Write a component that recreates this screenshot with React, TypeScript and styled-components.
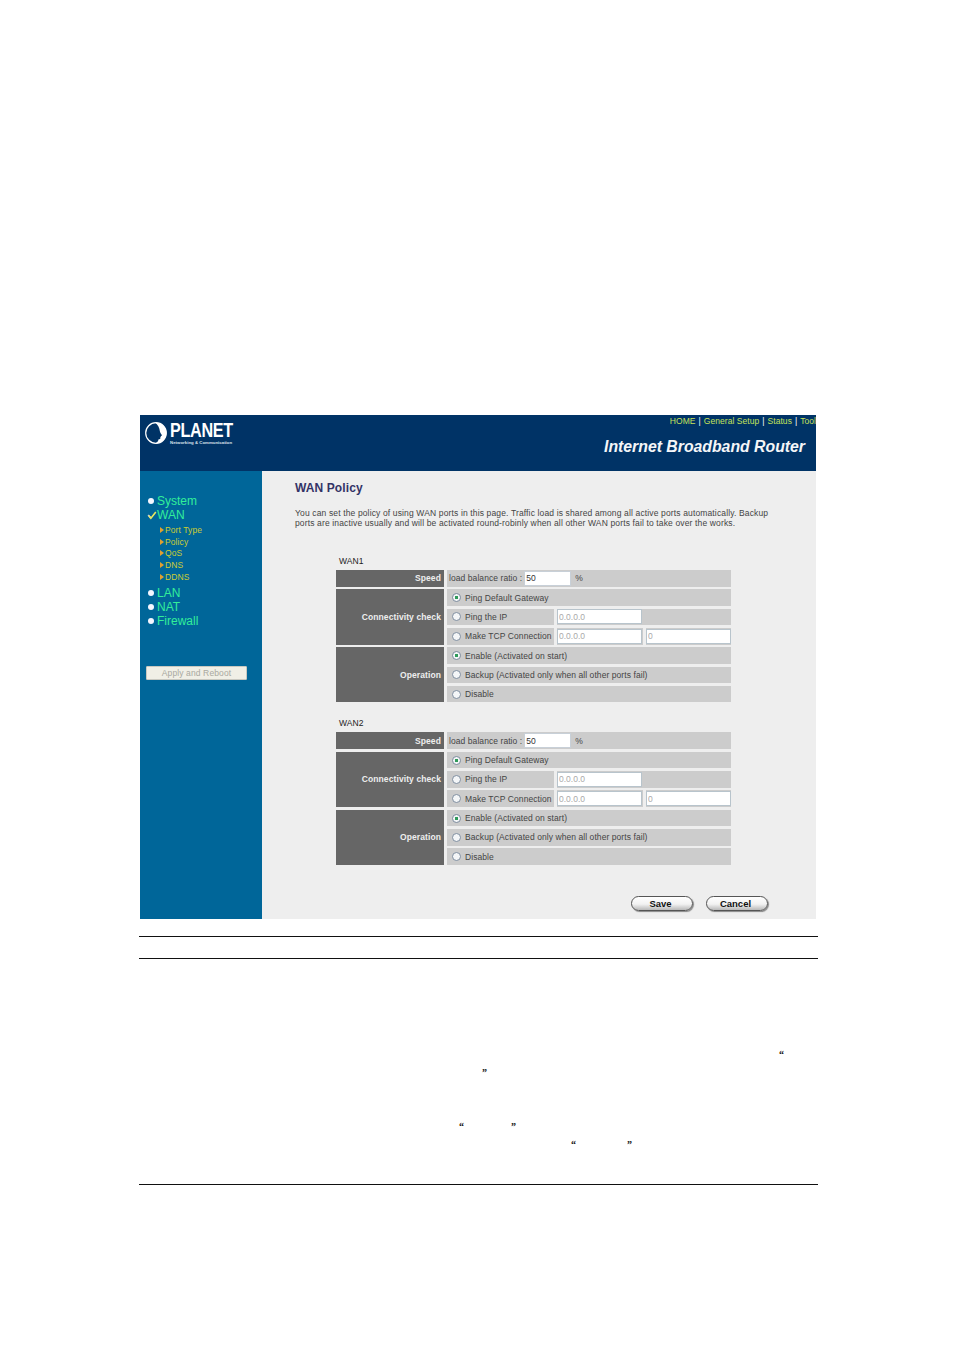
import styled, { createGlobalStyle } from "styled-components";

const GlobalStyle = createGlobalStyle`
  html, body {
    margin: 0;
    padding: 0;
    background: #fff;
  }
  body {
    font-family: "Liberation Sans", Arial, sans-serif;
  }
`;

const navLinks = ["HOME", "General Setup", "Status", "Tool"];
const subMenu = ["Port Type", "Policy", "QoS", "DNS", "DDNS"];

function Logo(): JSX.Element {
  return (
    <LogoWrap>
      <svg width="24" height="24" viewBox="0 0 24 24">
        <circle cx="12" cy="12" r="10.3" fill="none" stroke="#fff" strokeWidth="1.2" />
        <path
          d="M11 1.7c6.6-.6 11.4 4.2 11.4 10.3 0 6-4.8 10.4-11 10.4 1.6-1 3-2.4 3.2-4.2.6.2 1.6.2 1.8-.6.1-.6-.2-1-.1-1.4.5-.2.8-.6.5-1.1.6-.2 1.3-.5 1-1.1-.5-1-1.6-2-1.8-3.2C15.400 6.300 13.800 3.200 11 1.700z"
          fill="#fff"
        />
      </svg>
      <LogoText>
        <LogoName>PLANET</LogoName>
        <LogoTag>Networking &amp; Communication</LogoTag>
      </LogoText>
    </LogoWrap>
  );
}

function Tick(): JSX.Element {
  return (
    <svg width="10" height="9" viewBox="0 0 10 9">
      <path d="M.5 4.500 1.800 3.500 3.600 5.600 3.600 8.200z" fill="#c8ccd8" />
      <path d="M2 4.800 3.900 7.200 8.800 1" fill="none" stroke="#e8e860" strokeWidth="1.600" />
    </svg>
  );
}

function Wan({ name }: { name: string }): JSX.Element {
  return (
    <section>
      <WanName>{name}</WanName>
      <WanGrid>
        <HeadCell $rows={1}>Speed</HeadCell>
        <Cell $span={3}>
          load balance ratio :<SmallInput $w={47} defaultValue="50" />
          <Percent>%</Percent>
        </Cell>

        <HeadCell $rows={3}>Connectivity check</HeadCell>
        <Cell $span={3}>
          <Radio type="radio" name={`${name}-check`} defaultChecked />
          Ping Default Gateway
        </Cell>
        <Cell>
          <Radio type="radio" name={`${name}-check`} />
          Ping the IP
        </Cell>
        <Cell $span={2}>
          <FieldInput $w={85} defaultValue="0.0.0.0" disabled />
        </Cell>
        <Cell>
          <Radio type="radio" name={`${name}-check`} />
          Make TCP Connection
        </Cell>
        <Cell>
          <FieldInput $w={85} defaultValue="0.0.0.0" disabled />
        </Cell>
        <Cell>
          <FieldInput $w={85} defaultValue="0" disabled />
        </Cell>

        <HeadCell $rows={3}>Operation</HeadCell>
        <Cell $span={3}>
          <Radio type="radio" name={`${name}-op`} defaultChecked />
          Enable (Activated on start)
        </Cell>
        <Cell $span={3}>
          <Radio type="radio" name={`${name}-op`} />
          Backup (Activated only when all other ports fail)
        </Cell>
        <Cell $span={3}>
          <Radio type="radio" name={`${name}-op`} />
          Disable
        </Cell>
      </WanGrid>
    </section>
  );
}

export default function App(): JSX.Element {
  return (
    <Page>
      <GlobalStyle />
      <Frame>
        <Header>
          <Logo />
          <HeaderRight>
            <TopNav>
              {navLinks.map((link, i) => (
                <span key={link}>
                  {i > 0 && <NavSep>|</NavSep>}
                  {link}
                </span>
              ))}
            </TopNav>
            <Product>Internet Broadband Router</Product>
          </HeaderRight>
        </Header>
        <Body>
          <Sidebar>
            <MenuItem>
              <Bullet />
              System
            </MenuItem>
            <MenuItem>
              <TickBox>
                <Tick />
              </TickBox>
              WAN
            </MenuItem>
            <SubList>
              {subMenu.map((item) => (
                <SubItem key={item}>
                  <Arrow />
                  {item}
                </SubItem>
              ))}
            </SubList>
            <MenuItem>
              <Bullet />
              LAN
            </MenuItem>
            <MenuItem>
              <Bullet />
              NAT
            </MenuItem>
            <MenuItem>
              <Bullet />
              Firewall
            </MenuItem>
            <ApplyButton disabled>Apply and Reboot</ApplyButton>
          </Sidebar>
          <Main>
            <Title>WAN Policy</Title>
            <Description>
              You can set the policy of using WAN ports in this page. Traffic load is shared among all active ports
              automatically. Backup
              <br />
              ports are inactive usually and will be activated round-robinly when all other WAN ports fail to take over
              the works.
            </Description>
            <Tables>
              <Wan name="WAN1" />
              <Wan name="WAN2" />
            </Tables>
            <Actions>
              <PillButton>Save</PillButton>
              <PillButton>Cancel</PillButton>
            </Actions>
          </Main>
        </Body>
      </Frame>
      <TableRules />
      <Notes>
        <NoteLine>
          <Quote $left={639}>“</Quote>
        </NoteLine>
        <NoteLine>
          <Quote $left={342}>”</Quote>
        </NoteLine>
        <NoteLine />
        <NoteLine />
        <NoteLine>
          <Quote $left={319}>“</Quote>
          <Quote $left={47}>”</Quote>
        </NoteLine>
        <NoteLine>
          <Quote $left={431}>“</Quote>
          <Quote $left={51}>”</Quote>
        </NoteLine>
      </Notes>
      <BottomRule />
    </Page>
  );
}

const Page = styled.div`
  width: 954px;
  height: 1349px;
  padding: 415px 0 0 140px;
  box-sizing: border-box;
  overflow: hidden;
`;

const Frame = styled.div`
  width: 676px;
  height: 504px;
  display: flex;
  flex-direction: column;
`;

const Header = styled.header`
  height: 56px;
  flex: none;
  background: #003366;
  display: flex;
  justify-content: space-between;
`;

const LogoWrap = styled.div`
  display: flex;
  align-items: flex-start;
  gap: 2px;
  padding: 6px 0 0 4px;
`;

const LogoText = styled.div`
  display: flex;
  flex-direction: column;
  color: #fff;
`;

const LogoName = styled.div`
  font-size: 20px;
  line-height: 18px;
  font-weight: 700;
  letter-spacing: -0.4px;
  transform: scaleX(0.81);
  transform-origin: left;
`;

const LogoTag = styled.div`
  margin-top: 1px;
  font-size: 4.300px;
  line-height: 5px;
  font-weight: 700;
  letter-spacing: 0.03px;
  white-space: nowrap;
  color: #dfe6ee;
`;

const HeaderRight = styled.div`
  display: flex;
  flex-direction: column;
  align-items: flex-end;
`;

const TopNav = styled.nav`
  height: 13px;
  font-size: 8.500px;
  line-height: 13px;
  letter-spacing: 0.05px;
  color: #c6e25a;
  white-space: nowrap;
`;

const NavSep = styled.span`
  color: #fff;
  margin: 0 3px;
`;

const Product = styled.div`
  margin: 10px 11px 0 0;
  font-size: 15.800px;
  line-height: 18px;
  font-weight: 700;
  font-style: italic;
  color: #f4f6f8;
  white-space: nowrap;
`;

const Body = styled.div`
  flex: 1;
  display: flex;
  min-height: 0;
`;

const Sidebar = styled.aside`
  width: 122px;
  flex: none;
  background: #006699;
  padding: 23px 0 0 7px;
  box-sizing: border-box;
`;

const MenuItem = styled.div`
  display: flex;
  align-items: center;
  height: 14px;
  font-size: 12px;
  line-height: 14px;
  color: #33ee99;
`;

const Bullet = styled.span`
  width: 6px;
  height: 6px;
  margin: 0 3px 0 1px;
  border-radius: 50%;
  background: #f4f6ff;
`;

const TickBox = styled.span`
  width: 10px;
  height: 9px;
  display: flex;
`;

const SubList = styled.div`
  padding: 2px 0 3px 13px;
`;

const SubItem = styled.div`
  display: flex;
  align-items: center;
  height: 11.800px;
  font-size: 8.500px;
  letter-spacing: 0.1px;
  color: #cccc33;
`;

const Arrow = styled.span`
  width: 0;
  height: 0;
  margin-right: 1px;
  border-left: 4px solid #e0a030;
  border-top: 3px solid transparent;
  border-bottom: 3px solid transparent;
`;

const ApplyButton = styled.button`
  display: block;
  width: 101px;
  height: 14px;
  margin: 38px 0 0 -1px;
  padding: 0;
  border: 1px solid #c8c8c0;
  border-radius: 1px;
  background: #f0efe6;
  color: #a8a8a0;
  font-family: inherit;
  font-size: 8.500px;
  letter-spacing: 0.12px;
  line-height: 12px;
`;

const Main = styled.main`
  flex: 1;
  background: #eeeeee;
  padding-top: 10px;
  min-width: 0;
`;

const Title = styled.h1`
  margin: 0 0 0 33px;
  font-size: 12px;
  line-height: 14px;
  font-weight: 700;
  letter-spacing: 0.1px;
  color: #333366;
`;

const Description = styled.p`
  margin: 13px 0 0 33px;
  font-size: 8.500px;
  line-height: 10px;
  letter-spacing: 0.14px;
  color: #444;
  white-space: nowrap;
`;

const Tables = styled.div`
  margin: 28px 0 0 74px;
  width: 395px;
  display: flex;
  flex-direction: column;
  gap: 16px;
`;

const WanName = styled.div`
  height: 14px;
  padding-left: 3px;
  font-size: 8.500px;
  line-height: 10px;
  letter-spacing: 0.05px;
  color: #222;
`;

const WanGrid = styled.div`
  display: grid;
  grid-template-columns: 108px 107px 86px 85px;
  grid-auto-rows: 16.600px;
  column-gap: 3px;
  row-gap: 2.730px;
`;

const HeadCell = styled.div<{ $rows: number }>`
  grid-row: span ${(p) => p.$rows};
  display: flex;
  align-items: center;
  justify-content: flex-end;
  padding-right: 3px;
  background: #666666;
  color: #eeeeee;
  font-size: 8.500px;
  font-weight: 700;
  letter-spacing: 0.1px;
`;

const Cell = styled.div<{ $span?: number }>`
  grid-column: span ${(p) => p.$span ?? 1};
  display: flex;
  align-items: center;
  padding-left: 2px;
  background: #cccccc;
  color: #444;
  font-size: 8.500px;
  letter-spacing: 0.07px;
  white-space: nowrap;
`;

const Radio = styled.input`
  appearance: none;
  width: 9px;
  height: 9px;
  margin: 0 4px 0 3px;
  flex: none;
  border: 1px solid #7f8ea0;
  border-radius: 50%;
  box-sizing: border-box;
  background: #f4f6f8;

  &:checked {
    background: radial-gradient(circle, #2f9a5a 0 1.500px, #f4f6f8 2px);
  }
`;

const SmallInput = styled.input<{ $w: number }>`
  width: ${(p) => p.$w}px;
  height: 15px;
  margin-left: 2px;
  padding: 0 1px;
  box-sizing: border-box;
  border: 1px solid #c8d0d8;
  background: #fff;
  color: #333;
  font-family: inherit;
  font-size: 8.500px;
`;

const FieldInput = styled(SmallInput)`
  margin-left: -2px;
  &:disabled {
    background: #fff;
    color: #aaa;
    border-color: #b8c4cc;
  }
`;

const Percent = styled.span`
  margin-left: 4px;
`;

const Actions = styled.div`
  margin-top: 31px;
  padding-right: 48px;
  display: flex;
  justify-content: flex-end;
  gap: 13px;
`;

const PillButton = styled.button`
  width: 62px;
  height: 15px;
  padding: 0 3px 0 0;
  border: 1px solid #555;
  border-radius: 8px;
  background: linear-gradient(#ffffff 0%, #f2f2f2 55%, #b8b8b8 100%);
  box-shadow: 1px 1px 1px #888;
  color: #111;
  font-family: inherit;
  font-size: 9.500px;
  font-weight: 700;
  line-height: 13px;
`;

const TableRules = styled.div`
  width: 679px;
  height: 21px;
  margin: 17px 0 0 -1px;
  border-top: 1px solid #111;
  border-bottom: 1px solid #111;
`;

const Notes = styled.div`
  margin: 87px 0 0 0;
`;

const NoteLine = styled.div`
  height: 18px;
  display: flex;
  align-items: center;
`;

const Quote = styled.span<{ $left: number }>`
  margin-left: ${(p) => p.$left}px;
  font-family: "Liberation Serif", serif;
  font-size: 10px;
  line-height: 10px;
  font-weight: 700;
  color: #111;
`;

const BottomRule = styled.div`
  width: 679px;
  height: 1px;
  margin: 30px 0 0 -1px;
  background: #111;
`;
